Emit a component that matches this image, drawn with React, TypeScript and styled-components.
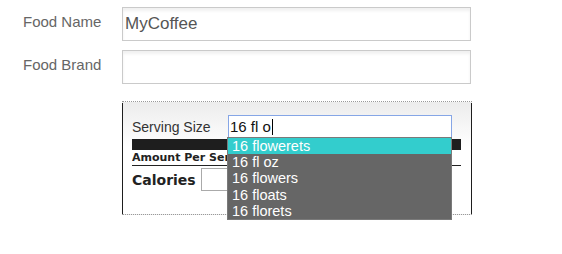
import React from "react";
import styled, { createGlobalStyle } from "styled-components";

const Global = createGlobalStyle`
  html, body { margin: 0; padding: 0; background: #fff; }
  body { font-family: Arial, "Liberation Sans", sans-serif; }
`;

const Page = styled.div`
  padding-top: 7px;
  padding-bottom: 30px;
  width: 562px;
`;

const Row = styled.div`
  display: flex;
  align-items: flex-start;
  margin-bottom: 9px;
`;

const Label = styled.label`
  width: 122px;
  box-sizing: border-box;
  padding-left: 23px;
  padding-top: 6px;
  font-size: 15px;
  line-height: 18px;
  color: #666;
`;

const TextInput = styled.div`
  box-sizing: border-box;
  width: 349px;
  height: 34px;
  border: 1px solid #cacaca;
  box-shadow: inset 0 3px 3px rgba(0, 0, 0, 0.06);
  padding-left: 2px;
  display: flex;
  align-items: center;
  font-size: 17px;
  color: #555;
`;

const Panel = styled.div`
  margin: 17px 0 0 122px;
  width: 350px;
  box-sizing: border-box;
  border-top: 1px dotted #999;
  border-bottom: 1px dotted #999;
  padding: 1px 0 0;
  background: linear-gradient(#ececec, #fff 45px);
  overflow: visible;
`;

const PanelInner = styled.div`
  border-left: 1px solid #1e1e1e;
  border-right: 1px solid #1e1e1e;
  padding: 12px 10px 0 9px;
  height: 111px;
  box-sizing: border-box;
  overflow: visible;
`;

const ServingRow = styled.div`
  display: flex;
  align-items: center;
  height: 23px;
  position: relative;
  z-index: 5;
`;

const ServingLabel = styled.span`
  width: 96px;
  font-size: 14px;
  color: #333;
`;

const ComboWrap = styled.div`
  position: relative;
`;

const ServingInput = styled.div`
  box-sizing: border-box;
  width: 224px;
  height: 23px;
  border: 1px solid #86a6e6;
  background: #fff;
  font-size: 15px;
  color: #111;
  padding-left: 1px;
  display: flex;
  align-items: center;
`;

const Caret = styled.span`
  display: inline-block;
  width: 1px;
  height: 16px;
  background: #000;
  margin-left: 1px;
`;

const Dropdown = styled.div`
  position: absolute;
  top: 22px;
  left: -1px;
  width: 225px;
  box-sizing: border-box;
  background: #666;
  border: 1px solid #7a7a7a;
  display: flex;
  flex-direction: column;
`;

const Item = styled.div<{ $active?: boolean }>`
  flex: 0 0 16.2px;
  line-height: 16px;
  padding-left: 4px;
  font-size: 14.5px;
  color: #fff;
  background: ${(p) => (p.$active ? "#33cdcd" : "transparent")};
  white-space: nowrap;
`;

const BlackBar = styled.div`
  height: 11px;
  margin-top: 1px;
  background: #1e1e1e;
`;

const AmountHeader = styled.div`
  font-family: Verdana, "DejaVu Sans", sans-serif;
  font-weight: bold;
  font-size: 11px;
  line-height: 15px;
  color: #222;
  border-bottom: 1px solid #222;
  white-space: nowrap;
  overflow: hidden;
`;

const CaloriesRow = styled.div`
  display: flex;
  align-items: center;
  margin-top: 2px;
`;

const CaloriesLabel = styled.span`
  font-family: Verdana, "DejaVu Sans", sans-serif;
  font-weight: bold;
  font-size: 14px;
  color: #222;
  width: 69px;
`;

const SmallInput = styled.div`
  box-sizing: border-box;
  width: 60px;
  height: 23px;
  border: 1px solid #aaa;
  background: #fff;
`;

const options = ["16 flowerets", "16 fl oz", "16 flowers", "16 floats", "16 florets"];

export default function App() {
  return (
    <Page>
      <Global />
      <Row>
        <Label>Food Name</Label>
        <TextInput>MyCoffee</TextInput>
      </Row>
      <Row>
        <Label>Food Brand</Label>
        <TextInput />
      </Row>
      <Panel>
        <PanelInner>
          <ServingRow>
            <ServingLabel>Serving Size</ServingLabel>
            <ComboWrap>
              <ServingInput>
                16 fl o<Caret />
              </ServingInput>
              <Dropdown>
                {options.map((o, i) => (
                  <Item key={o} $active={i === 0}>
                    {o}
                  </Item>
                ))}
              </Dropdown>
            </ComboWrap>
          </ServingRow>
          <BlackBar />
          <AmountHeader>Amount Per Serving</AmountHeader>
          <CaloriesRow>
            <CaloriesLabel>Calories</CaloriesLabel>
            <SmallInput />
          </CaloriesRow>
        </PanelInner>
      </Panel>
    </Page>
  );
}
